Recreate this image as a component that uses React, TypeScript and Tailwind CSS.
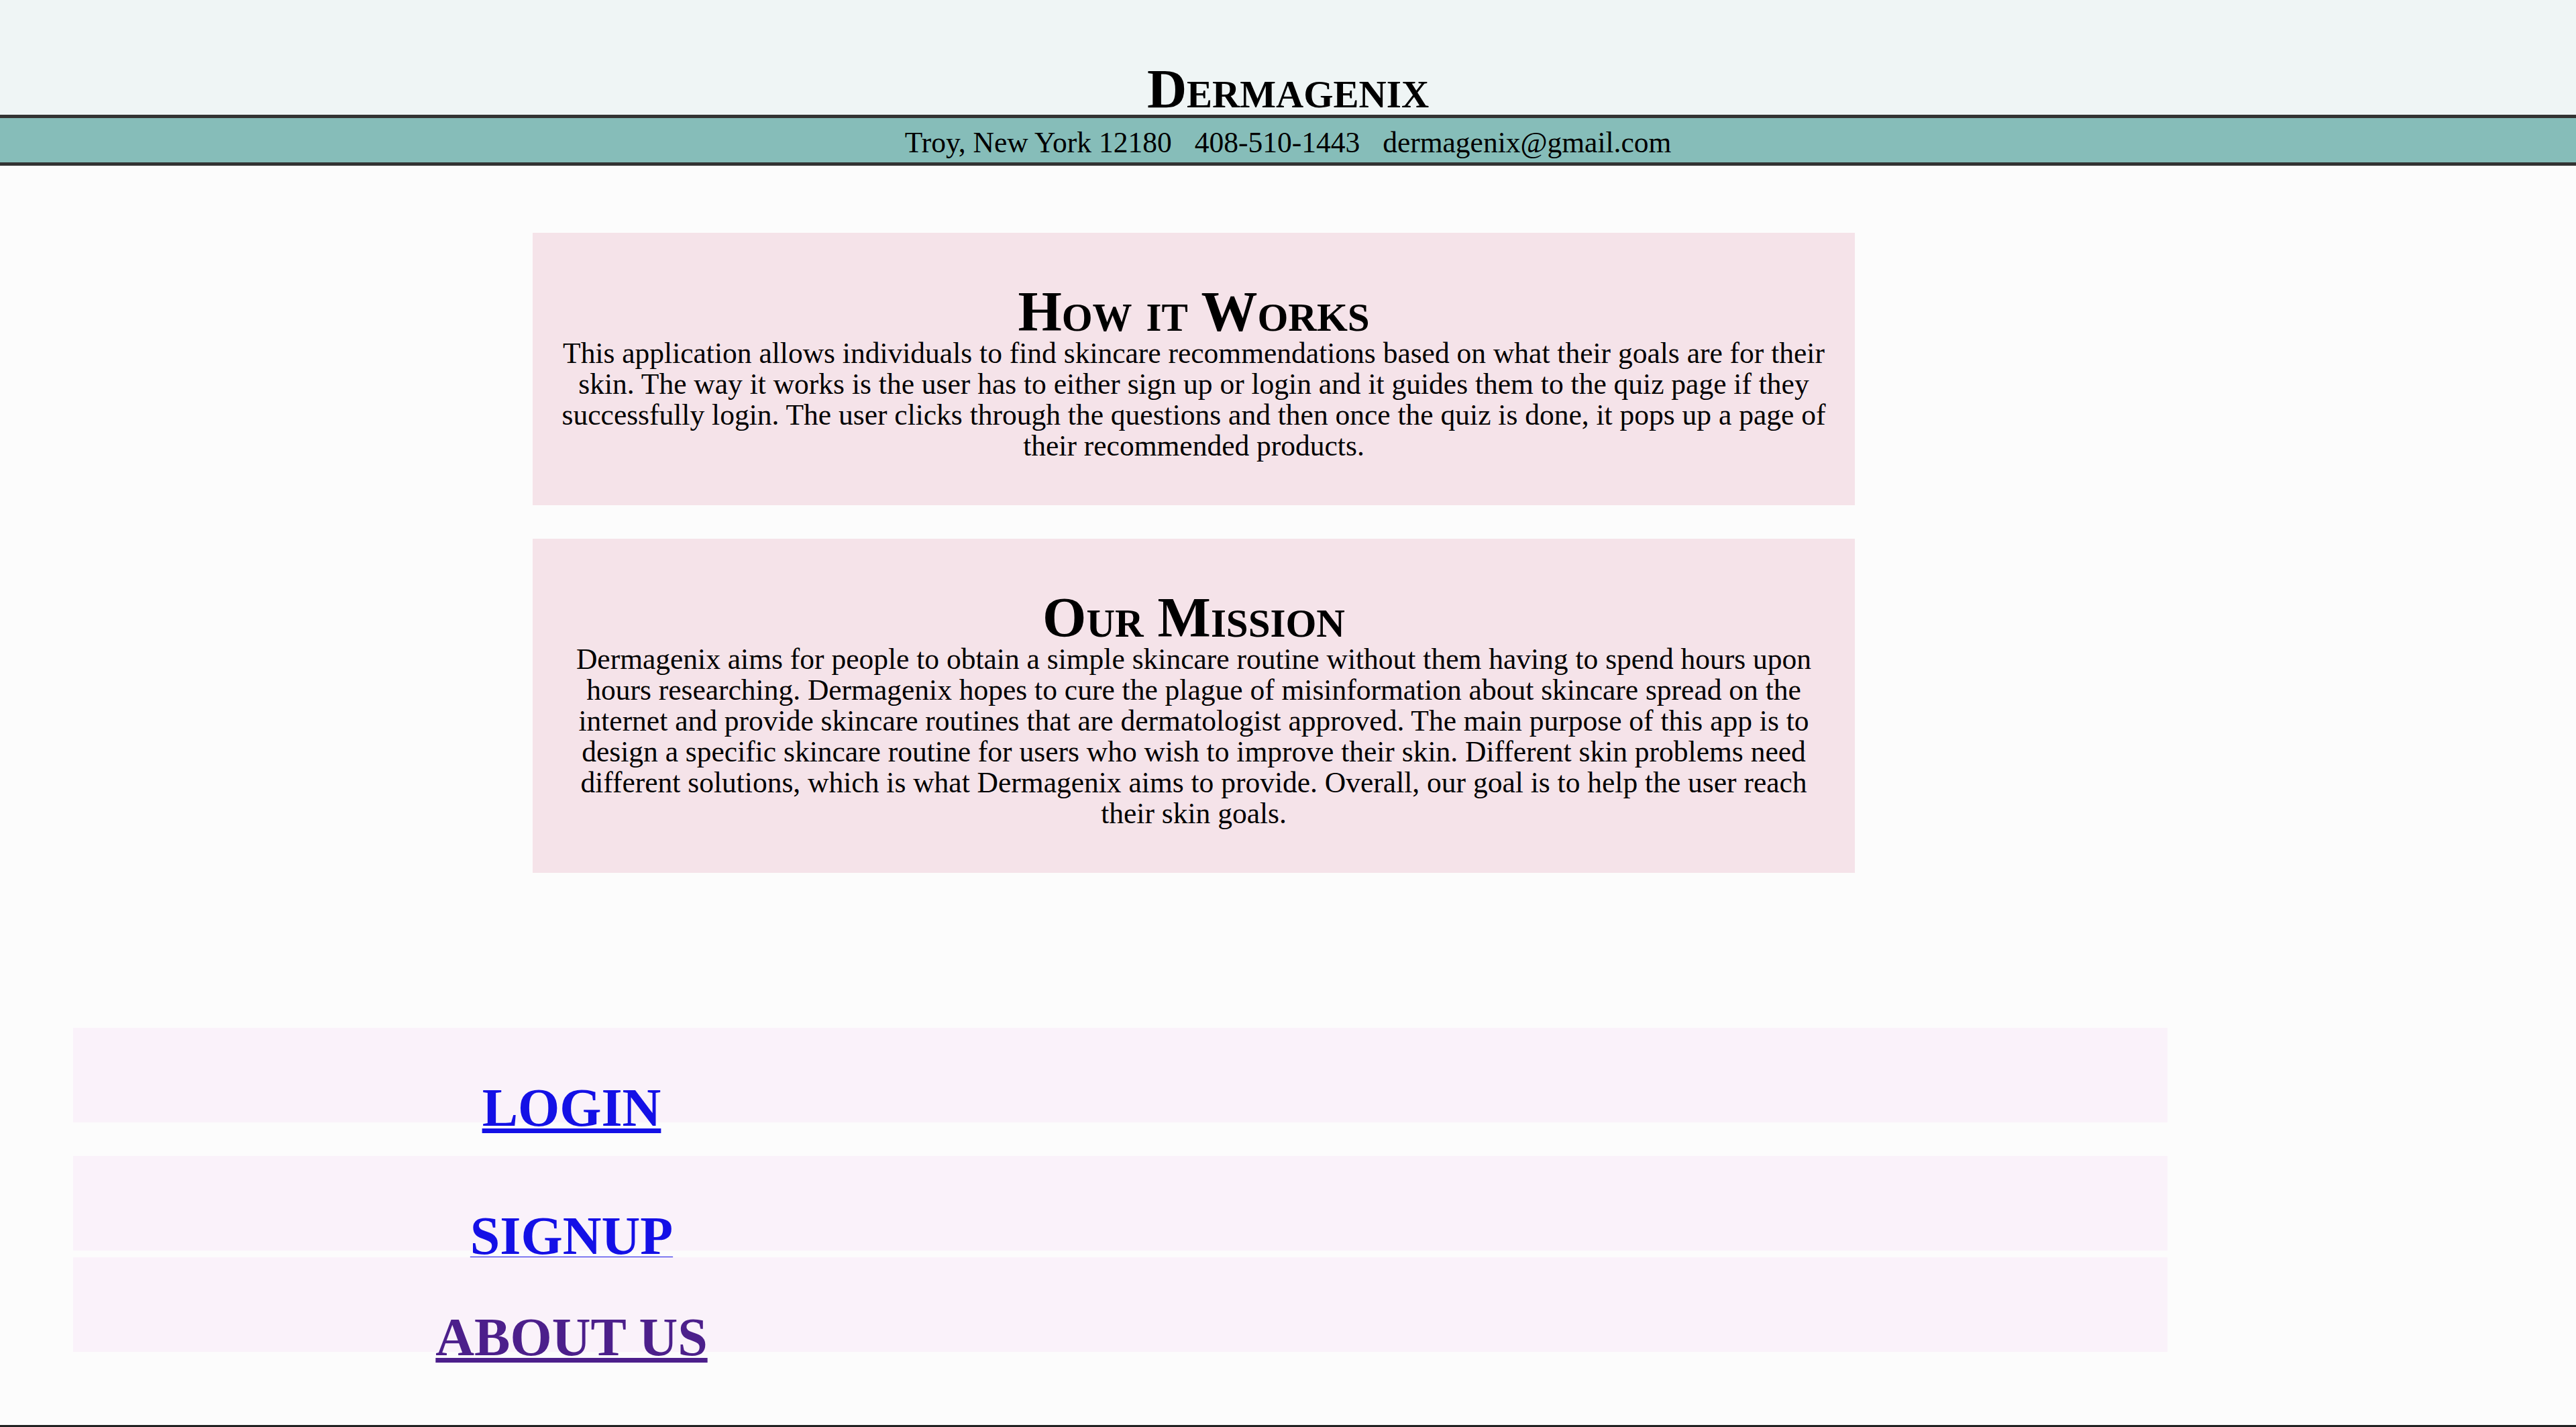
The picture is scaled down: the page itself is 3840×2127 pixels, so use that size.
import React from "react";

const sections = [
  {
    title: "How it Works",
    body: "This application allows individuals to find skincare recommendations based on what their goals are for their skin. The way it works is the user has to either sign up or login and it guides them to the quiz page if they successfully login. The user clicks through the questions and then once the quiz is done, it pops up a page of their recommended products.",
  },
  {
    title: "Our Mission",
    body: "Dermagenix aims for people to obtain a simple skincare routine without them having to spend hours upon hours researching. Dermagenix hopes to cure the plague of misinformation about skincare spread on the internet and provide skincare routines that are dermatologist approved. The main purpose of this app is to design a specific skincare routine for users who wish to improve their skin. Different skin problems need different solutions, which is what Dermagenix aims to provide. Overall, our goal is to help the user reach their skin goals.",
  },
];

const links = [
  { label: "LOGIN", color: "text-[#1410e6]" },
  { label: "SIGNUP", color: "text-[#1410e6]" },
  { label: "ABOUT US", color: "text-[#4c1f8b]" },
];

export default function App() {
  return (
    <div className="min-h-[2127px] flex flex-col bg-[#fcfcfc] text-black font-['Liberation_Serif','Times_New_Roman',serif]">
      {/* Header */}
      <header>
        <div className="h-[171px] bg-[#eff5f5] pt-[95px] text-center text-[82px] leading-[76px] font-bold [font-variant:small-caps]">
          Dermagenix
        </div>
        <div className="h-[76px] border-y-[5px] border-[#333333] bg-[#86bdb9] pt-[6px] text-[43.5px] leading-[60px]">
          <div className="flex justify-center gap-[34px]">
            <span>Troy, New York 12180</span>
            <span>408-510-1443</span>
            <span>dermagenix@gmail.com</span>
          </div>
        </div>
      </header>

      {/* Info cards */}
      <main className="pt-[100px]">
        <div className="ml-[794px] w-[1971px] flex flex-col gap-[50px]">
          {sections.map((s) => (
            <section key={s.title} className="bg-[#f5e3e9] pt-[80px] pb-[66px] px-[30px] text-center">
              <h2 className="text-[84px] leading-[76px] font-bold [font-variant:small-caps]">{s.title}</h2>
              <p className="text-[43.5px] leading-[46px]">{s.body}</p>
            </section>
          ))}
        </div>
      </main>

      {/* Nav links */}
      <nav className="mt-[231px] ml-[109px] w-[3122px] flex flex-col">
        {links.map((l, i) => (
          <div
            key={l.label}
            className={`h-[141px] bg-[#faf2fa] pt-[79px] ${i === 1 ? "mt-[50px]" : i === 2 ? "mt-[10px]" : ""}`}
          >
            <div className="w-[1486px] text-center">
              <a
                href="#"
                className={`${l.color} text-[80px] leading-[80px] font-bold underline [text-decoration-thickness:7px] [text-underline-offset:4px]`}
              >
                {l.label}
              </a>
            </div>
          </div>
        ))}
      </nav>

      <div className="flex-1" />
      <footer className="h-[3px] bg-[#222222]" />
    </div>
  );
}
